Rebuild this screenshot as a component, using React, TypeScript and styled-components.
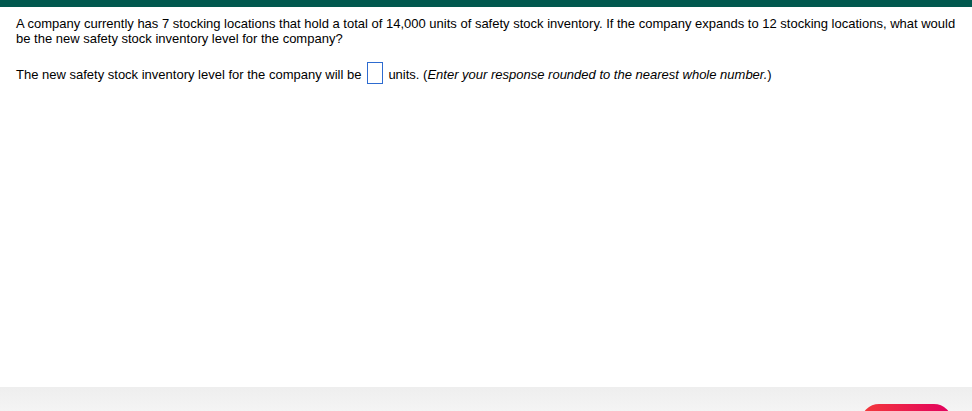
import React, { FC } from 'react';
import styled, { createGlobalStyle } from 'styled-components';

const GlobalStyle = createGlobalStyle`
  html, body {
    margin: 0;
    padding: 0;
    overflow: hidden;
    background: #fff;
  }
`;

const Page = styled.div`
  height: 100vh;
  display: flex;
  flex-direction: column;
  font-family: 'Liberation Sans', Arial, sans-serif;
  font-size: 13px;
  line-height: 15px;
  color: #000;
`;

const TopBar = styled.div`
  flex: 0 0 7px;
  background-color: #02594f;
`;

const Content = styled.div`
  flex: 1 1 auto;
  min-height: 0;
  padding: 9px 16px 0 16px;
`;

const Question = styled.p`
  margin: 0;
`;

const AnswerLine = styled.p`
  margin: 16px 0 0 0;
`;

const AnswerBox = styled.span`
  display: inline-block;
  box-sizing: border-box;
  width: 16px;
  height: 22px;
  margin: 0 5px 0 6px;
  border: 1px solid #2d6bd0;
  vertical-align: -5px;
`;

const Hint = styled.em`
  font-style: italic;
`;

// only the top edge of the footer shows in the frame
const Footer = styled.div`
  flex: 0 0 24px;
  height: 24px;
  min-height: 0;
  display: flex;
  justify-content: flex-end;
  align-items: flex-start;
  padding-right: 20px;
  overflow: hidden;
  background: linear-gradient(180deg, #eeeeee 0%, #f4f4f4 100%);
`;

const NextButton = styled.button`
  margin-top: 17px;
  width: 91px;
  height: 36px;
  border: none;
  border-radius: 18px;
  background: linear-gradient(90deg, #f33a3a 0%, #e2005f 100%);
  flex-shrink: 0;
`;

const App: FC = () => {
  return (
    <>
      <GlobalStyle />
      <Page>
        <TopBar />
        <Content>
          <Question>
            A company currently has 7 stocking locations that hold a total of 14,000 units of safety stock
            inventory. If the company expands to 12 stocking locations, what would be the new safety stock
            inventory level for the company?
          </Question>
          <AnswerLine>
            The new safety stock inventory level for the company will be
            <AnswerBox />
            units. (<Hint>Enter your response rounded to the nearest whole number.</Hint>)
          </AnswerLine>
        </Content>
        <Footer>
          <NextButton aria-label="Check answer" />
        </Footer>
      </Page>
    </>
  );
};

export default App;
